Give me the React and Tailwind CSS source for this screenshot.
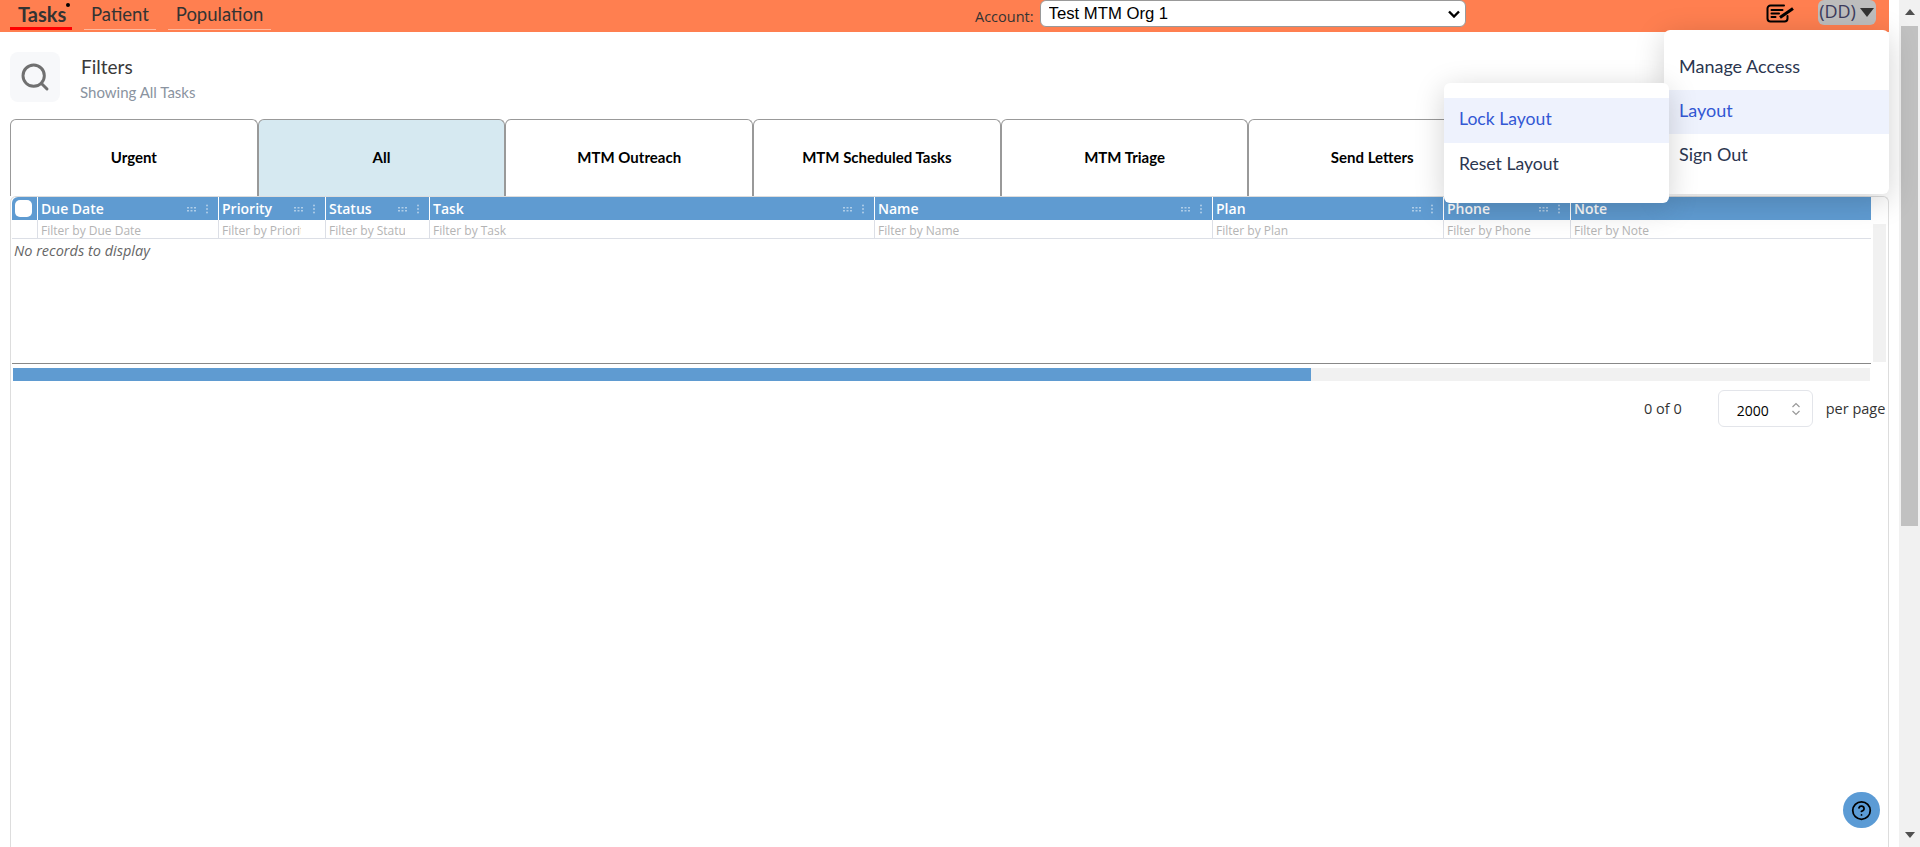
import React from 'react';
import { Search, CircleHelp } from 'lucide-react';

const proxima = "font-['Lato','Noto_Sans',sans-serif]";
const segoe = "font-['Open_Sans','Noto_Sans',sans-serif]";

const tabs = [
    { label: 'Urgent' },
    { label: 'All', active: true },
    { label: 'MTM Outreach' },
    { label: 'MTM Scheduled Tasks' },
    { label: 'MTM Triage' },
    { label: 'Send Letters' },
];

const columns = [
    { title: 'Due Date', width: 'w-[181px]', filter: 'Filter by Due Date', tools: true },
    { title: 'Priority', width: 'w-[107px]', filter: 'Filter by Priority', tools: true },
    { title: 'Status', width: 'w-[104px]', filter: 'Filter by Status', tools: true },
    { title: 'Task', width: 'w-[445px]', filter: 'Filter by Task', tools: true },
    { title: 'Name', width: 'w-[338px]', filter: 'Filter by Name', tools: true },
    { title: 'Plan', width: 'w-[231px]', filter: 'Filter by Plan', tools: true },
    { title: 'Phone', width: 'w-[127px]', filter: 'Filter by Phone', tools: true },
    { title: 'Note', width: 'w-[301px]', filter: 'Filter by Note', tools: false },
];

const ColumnTools = () => (
    <svg width="26" height="10" viewBox="0 0 26 10" className="shrink-0 fill-white opacity-50">
        {[0, 3.5, 7].map((x) => (
            <g key={x}>
                <rect x={x} y="3" width="2" height="1.5" />
                <rect x={x} y="6" width="2" height="1.5" />
            </g>
        ))}
        <circle cx="20" cy="1.5" r="1" />
        <circle cx="20" cy="5" r="1" />
        <circle cx="20" cy="8.5" r="1" />
    </svg>
);

const NoteIcon = () => (
    <svg width="28" height="19" viewBox="0 0 28 19" fill="none" stroke="#000" strokeWidth="2" strokeLinecap="round">
        <path d="M18 1.500H4.500a3 3 0 0 0-3 3v10a3 3 0 0 0 3 3h14a3 3 0 0 0 3-3V12" />
        <path d="M5.500 6h11M5.500 9.500h7.500M5.500 13h4" />
        <path d="M14 13.500L27 4.500" strokeWidth="3" strokeLinecap="butt" />
    </svg>
);

const Menu = ({ className, items, rowClass }) => (
    <div className={`absolute z-10 bg-white rounded-md shadow-[0_6px_30px_rgba(0,0,0,0.18)] ${proxima} ${className}`}>
        {items.map((item) => (
            <div
                key={item.label}
                className={`flex items-center pb-[3px] ${rowClass} ${item.active ? 'bg-[#eef2fd] text-[#3358d4]' : 'text-[#2b3650]'}`}
            >
                {item.label}
            </div>
        ))}
    </div>
);

export default function App() {
    return (
        <div className="relative flex h-[847px] w-[1920px] overflow-hidden bg-white">
            <div className="w-[1889px] shrink-0">
                {/* top bar */}
                <header className="flex h-8 bg-[#ff7f50] pl-[10px]">
                    <nav className={`flex items-start gap-3 text-[18.5px] leading-[28px] text-[#333] ${proxima}`}>
                        <a className="relative h-[30px] w-[62px] border-b-[3px] border-[#f00] pl-2 text-[20px] font-bold">
                            Tasks
                            <span className="absolute left-[56px] top-[3px] h-1 w-1 rounded-full bg-black" />
                        </a>
                        <a className="h-[30px] w-[72px] border-b border-[#ffb99e] text-center">Patient</a>
                        <a className="h-[30px] w-[103px] border-b border-[#ffb99e] text-center">Population</a>
                    </nav>
                    <label className={`ml-[704px] mt-[7px] text-[14.5px] leading-[20px] text-[#333] ${segoe}`}>Account:</label>
                    <div className="relative ml-[6px] h-[27px] w-[426px]">
                        <select className="h-full w-full appearance-none rounded-md border border-[#999] bg-white pl-2 text-[16.7px] text-black font-['Liberation_Sans',sans-serif]">
                            <option>Test MTM Org 1</option>
                        </select>
                        <svg width="12" height="8" viewBox="0 0 12 8" fill="none" stroke="#000" strokeWidth="2.400" className="pointer-events-none absolute right-[6px] top-[10px]">
                            <path d="M1 1.500l5 5 5-5" />
                        </svg>
                    </div>
                    <div className="ml-[300px] mt-[4px]">
                        <NoteIcon />
                    </div>
                    <button className={`ml-6 flex h-[25px] w-[58px] items-start justify-center gap-1 rounded-md bg-[#bdbdbd] text-[18px] leading-[22px] text-[#3b3b5c] ${segoe}`}>
                        (DD)
                        <svg width="14" height="9" viewBox="0 0 14 9" className="mt-[8px] fill-[#333]">
                            <path d="M0 0h14L7 9z" />
                        </svg>
                    </button>
                </header>

                {/* filters */}
                <section className="ml-[10px] mt-5 flex h-[50px] items-start gap-5">
                    <div className="flex h-[50px] w-[50px] items-center justify-center rounded-lg bg-[#f7f8fa]">
                        <Search className="h-8 w-8 text-[#707070]" strokeWidth={2.2} />
                    </div>
                    <div className={proxima}>
                        <div className="pl-px text-[19px] leading-[30px] text-[#3a3a3a]">Filters</div>
                        <div className="text-[15px] leading-[20px] text-[#8a93a0]">Showing All Tasks</div>
                    </div>
                </section>

                {/* tabs */}
                <div className={`ml-[10px] mt-[17px] flex h-[77px] ${proxima}`}>
                    {tabs.map((tab) => (
                        <div
                            key={tab.label}
                            className={`flex w-[247.7px] shrink-0 items-center justify-center rounded-t-md border border-b-0 border-[#999] pb-[2px] text-[15px] font-bold text-black ${tab.active ? 'bg-[#d6e9f1]' : 'bg-white'}`}
                        >
                            {tab.label}
                        </div>
                    ))}
                </div>

                {/* grid */}
                <div className={`ml-[10px] h-[651px] w-[1879px] rounded-t-md border border-b-0 border-[#ddd] pl-px ${segoe}`}>
                    <div className="flex">
                        <div className="w-[1859px] shrink-0">
                            <div className="flex h-[23px] rounded-tl-md bg-[#5f9bd1]">
                                <div className="flex w-[25px] shrink-0 items-center pl-[3px]">
                                    <span className="h-[17px] w-[17px] rounded-[5px] bg-white" />
                                </div>
                                {columns.map((col) => (
                                    <div
                                        key={col.title}
                                        className={`flex shrink-0 items-center justify-between border-l border-white pl-[3px] pr-[5px] text-[14px] font-semibold text-white ${col.width}`}
                                    >
                                        {col.title}
                                        {col.tools && <ColumnTools />}
                                    </div>
                                ))}
                            </div>
                            <div className="flex h-[19px] border-b border-[#dcdfe6]">
                                <div className="w-[25px] shrink-0" />
                                {columns.map((col) => (
                                    <div
                                        key={col.title}
                                        className={`shrink-0 border-l border-[#dcdfe6] pl-[3px] pr-6 pt-[3px] text-[12px] leading-[15px] text-[#b4b4b4] ${col.width}`}
                                    >
                                        <div className="overflow-hidden whitespace-nowrap">{col.filter}</div>
                                    </div>
                                ))}
                            </div>
                            <div className="h-[125px] border-b border-[#888] pl-[2px] pt-[2px] text-[14.5px] leading-[20px] italic text-[#666]">
                                No records to display
                            </div>
                        </div>
                        <div className="ml-[2px] mt-[27px] h-[138px] w-[13px] bg-[#f1f1f1]" />
                    </div>
                    <div className="ml-px mt-1 h-[13px] w-[1857px] bg-[#f1f1f1]">
                        <div className="h-full w-[1298px] bg-[#5f9bd1]" />
                    </div>
                    <div className="mt-[9px] flex items-center text-[14.5px] text-[#333]">
                        <span className="ml-[1632px]">0 of 0</span>
                        <div className="ml-[36px] flex h-[37px] w-[95px] items-center rounded-md border border-[#e3e5ea] pl-[18px] pr-[11px] text-[14px]">
                            <span className="flex-1 pt-1 text-black">2000</span>
                            <svg width="10" height="14" viewBox="0 0 10 14" fill="none" stroke="#999" strokeWidth="1.200">
                                <path d="M1.500 5L5 1.500 8.500 5M1.500 9L5 12.500 8.500 9" />
                            </svg>
                        </div>
                        <span className="ml-[13px] whitespace-nowrap">per page</span>
                    </div>
                </div>
            </div>

            {/* page scrollbar */}
            <div className="ml-[10px] flex h-full w-[21px] flex-col items-center bg-[#f1f1f1]">
                <svg width="10" height="6" viewBox="0 0 10 6" className="mt-[9px] fill-[#505050]">
                    <path d="M5 0l5 6H0z" />
                </svg>
                <div className="mt-[11px] h-[500px] w-[17px] bg-[#c1c1c1]" />
                <svg width="10" height="6" viewBox="0 0 10 6" className="mt-[306px] fill-[#505050]">
                    <path d="M0 0h10L5 6z" />
                </svg>
            </div>

            {/* open dropdowns */}
            <Menu
                className="left-[1664px] top-[30px] w-[225px] py-4 text-[18px]"
                rowClass="h-[44px] pl-[15px]"
                items={[{ label: 'Manage Access' }, { label: 'Layout', active: true }, { label: 'Sign Out' }]}
            />
            <Menu
                className="left-[1444px] top-[83px] w-[225px] py-[15px] text-[17.6px]"
                rowClass="h-[45px] pl-[15px]"
                items={[{ label: 'Lock Layout', active: true }, { label: 'Reset Layout' }]}
            />

            {/* help button */}
            <button className="absolute left-[1843px] top-[792px] flex h-[36px] w-[37px] items-center justify-center rounded-full bg-[#5b9bd5]">
                <CircleHelp className="h-[21px] w-[21px] text-black" strokeWidth={2} />
            </button>
        </div>
    );
}
